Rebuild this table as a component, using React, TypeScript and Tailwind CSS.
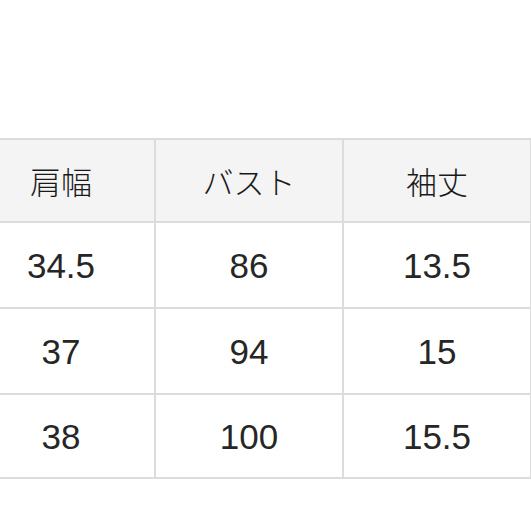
import React from "react";

const headers = ["肩幅", "バスト", "袖丈"];
const rows = [
  ["34.5", "86", "13.5"],
  ["37", "94", "15"],
  ["38", "100", "15.5"],
];
const rowHeights = ["h-[84px]", "h-[84px]", "h-[82px]"];

export default function App() {
  return (
    <div className="w-[531px] h-[531px] bg-white overflow-hidden" style={{ fontFamily: '"Noto Sans CJK JP", sans-serif' }}>
      <div className="pt-[138px] ml-[-34px]">
        <div className="grid grid-cols-[186px_186px_186px] gap-[2px] p-[2px] bg-[#dcdcdc] w-[566px]">
          {headers.map((h) => (
            <div key={h} className="h-[81px] bg-[#f4f4f4] flex items-center justify-center text-[31px] font-light leading-none text-[#1a1a1a]">
              {h}
            </div>
          ))}
          {rows.map((r, i) =>
            r.map((c, j) => (
              <div
                key={`${i}-${j}`}
                className={`${rowHeights[i]} bg-white flex items-center justify-center text-[35px] leading-none text-[#262626]`}
                style={{ fontFamily: '"Liberation Sans", sans-serif' }}
              >
                {c}
              </div>
            ))
          )}
        </div>
      </div>
    </div>
  );
}
